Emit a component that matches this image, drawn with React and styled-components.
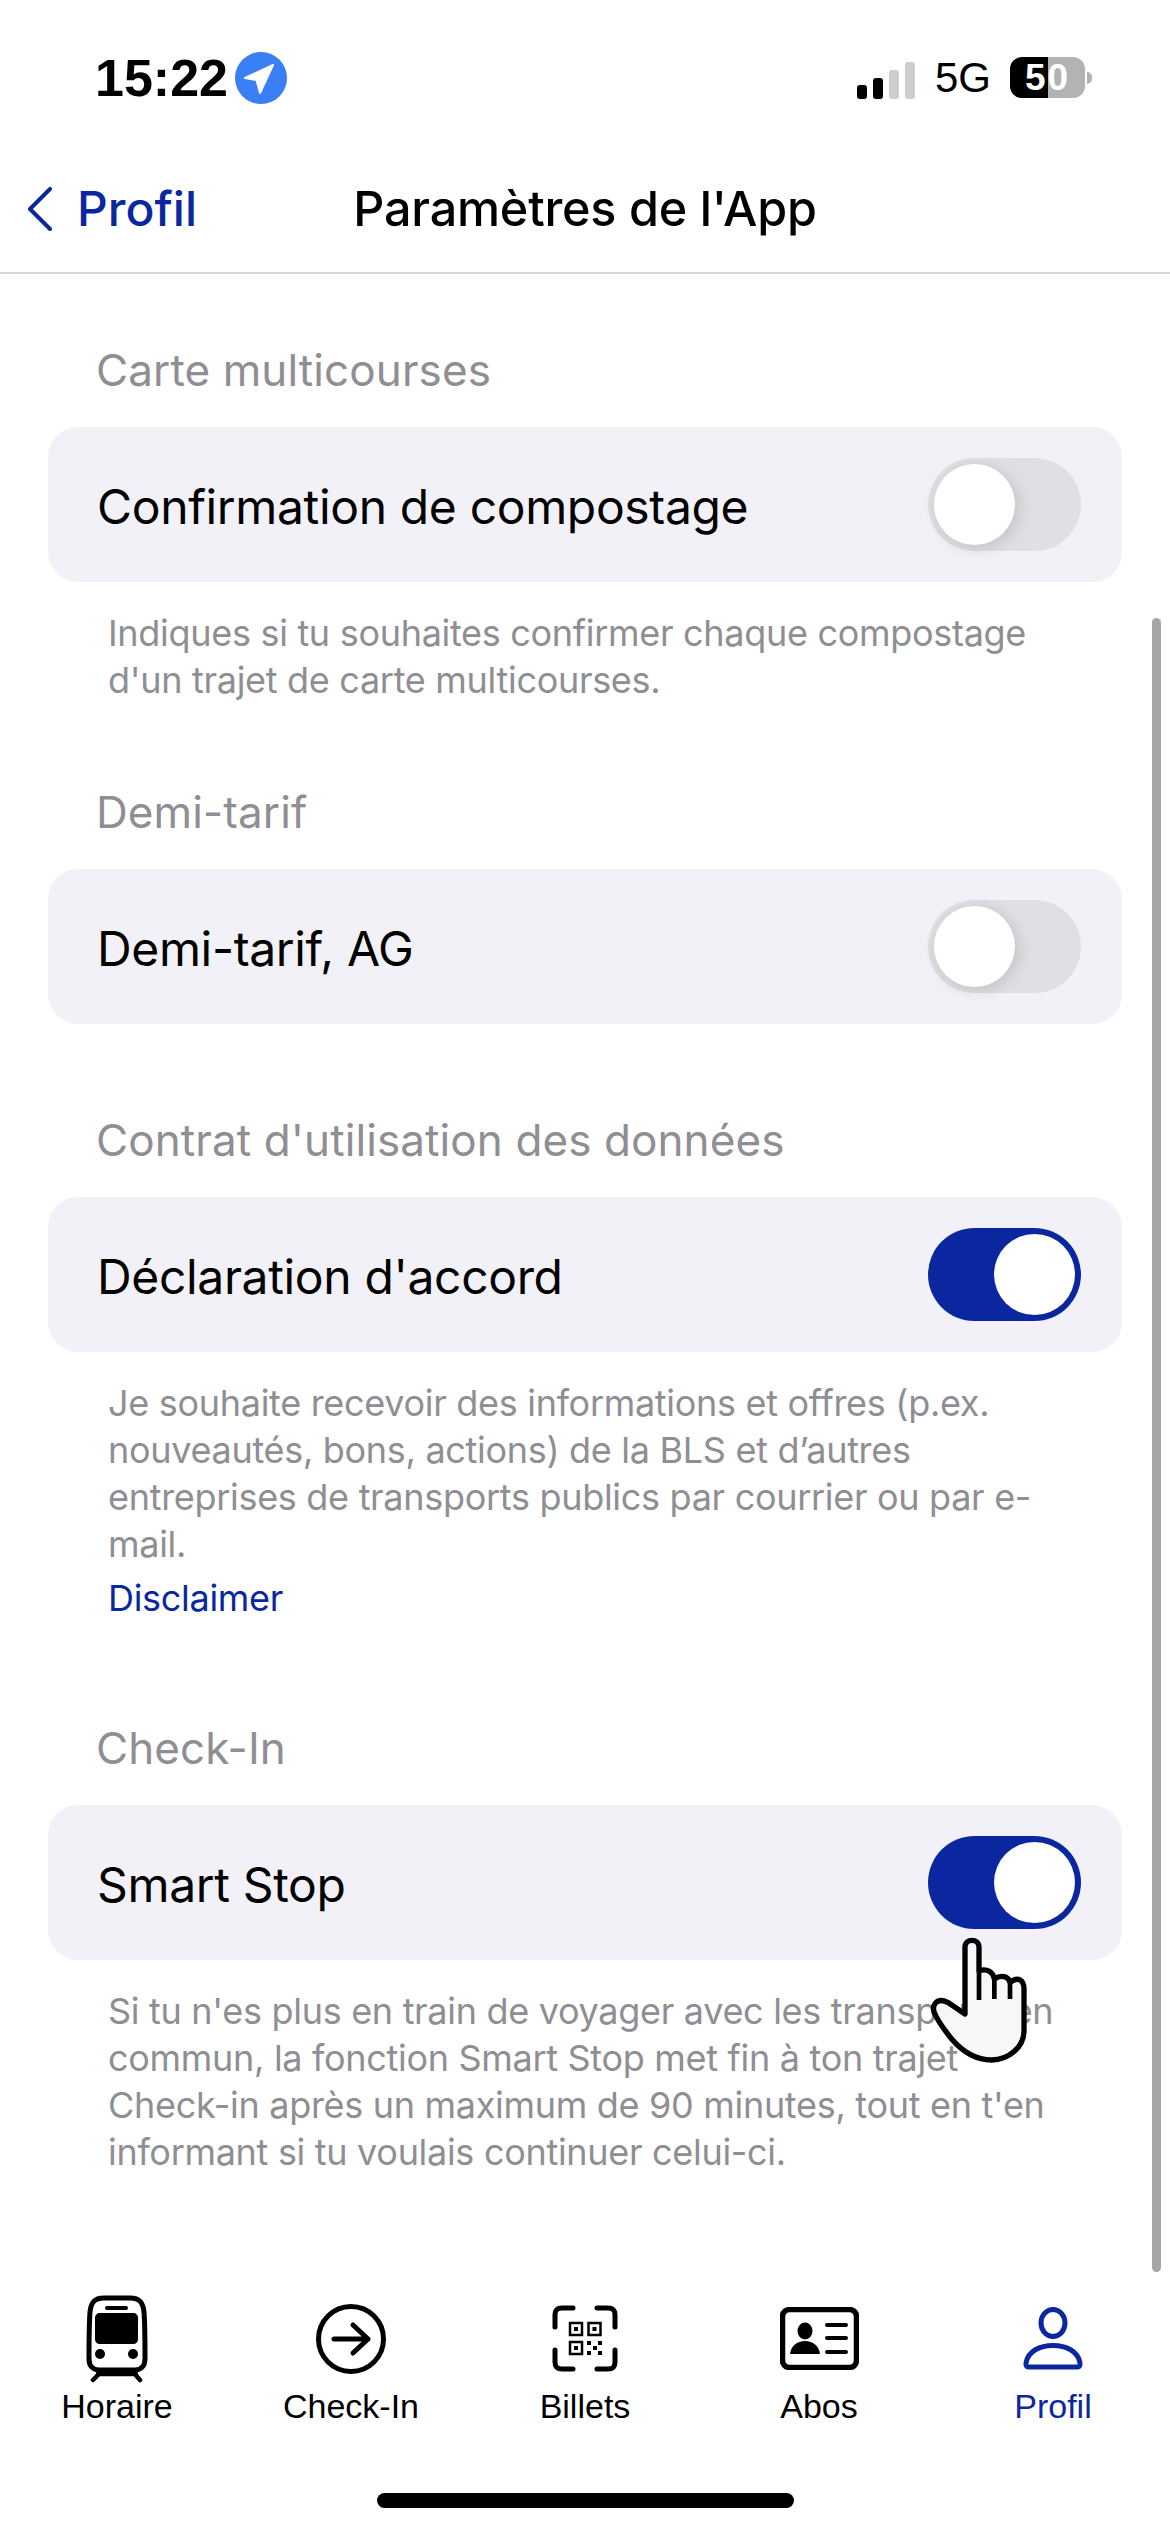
import React from "react";
import styled, { createGlobalStyle } from "styled-components";

const Global = createGlobalStyle`
  html, body { margin: 0; padding: 0; background: #fff; }
  body { font-family: Inter, "Noto Sans", sans-serif; color: #000; }
`;

const Screen = styled.div`
  position: relative;
  width: 1170px;
  height: 2532px;
  overflow: hidden;
  display: flex;
  flex-direction: column;
  background: #fff;
`;

const StatusBar = styled.div`
  height: 155px;
  padding: 0 85px 0 95px;
  display: flex;
  align-items: center;
  justify-content: space-between;
  box-sizing: border-box;
`;

const TimeGroup = styled.div`
  display: flex;
  align-items: center;
  gap: 7px;
`;

const Time = styled.span`
  font-family: "Liberation Sans", sans-serif;
  font-size: 52px;
  font-weight: 700;
  line-height: 52px;
`;

const StatusRight = styled.div`
  display: flex;
  align-items: center;
`;

const Bars = styled.div`
  display: flex;
  align-items: flex-end;
  gap: 6px;
  height: 37px;
  margin-top: 5px;
`;

const Bar = styled.div`
  width: 10px;
  height: ${(p) => p.$h}px;
  border-radius: 3px;
  background: ${(p) => (p.$on ? "#000" : "#cdcdcd")};
`;

const Network = styled.span`
  margin: 0 21px 0 20px;
  font-family: "Liberation Sans", sans-serif;
  font-size: 42px;
  line-height: 42px;
  width: 54px;
`;

const Battery = styled.div`
  position: relative;
  width: 75px;
  height: 41px;
  border-radius: 12px;
  background: linear-gradient(to right, #000 51%, #b3b3b3 51%);
  color: #fff;
  font-family: "Liberation Sans", sans-serif;
  font-size: 37px;
  font-weight: 700;
  letter-spacing: 2px;
  line-height: 41px;
  text-align: center;
  &::after {
    content: "";
    position: absolute;
    right: -7px;
    top: 15px;
    width: 5px;
    height: 12px;
    border-radius: 0 6px 6px 0;
    background: #b3b3b3;
  }
`;

const NavBar = styled.div`
  height: 107px;
  padding-bottom: 10px;
  display: grid;
  grid-template-columns: 1fr auto 1fr;
  align-items: center;
  border-bottom: 2px solid #d6d6d6;
  box-sizing: content-box;
`;

const BackLink = styled.div`
  display: flex;
  align-items: center;
  gap: 24px;
  padding-left: 27px;
  color: #0b27a0;
  font-size: 48px;
  font-weight: 500;
`;

const Title = styled.div`
  font-size: 48.5px;
  font-weight: 500;
  letter-spacing: -0.2px;
`;

const Content = styled.div`
  flex: 1;
  padding: 0 48px;
`;

const Section = styled.section`
  padding-top: ${(p) => p.$top}px;
`;

const SectionLabel = styled.div`
  height: 58px;
  line-height: 58px;
  margin: 0 0 28px 48px;
  color: #8e8e93;
  font-size: 44px;
  letter-spacing: 0.1px;
`;

const Card = styled.div`
  height: 155px;
  padding: 0 41px 0 49px;
  box-sizing: border-box;
  display: flex;
  align-items: center;
  justify-content: space-between;
  background: #f2f1f7;
  border-radius: 30px;
`;

const CardText = styled.span`
  padding-top: 3px;
  font-size: 48px;
  letter-spacing: -0.35px;
`;

const Toggle = styled.div`
  position: relative;
  width: 153px;
  height: 93px;
  border-radius: 47px;
  background: ${(p) => (p.$on ? "#0b27a0" : "#dfdfe4")};
  &::after {
    content: "";
    position: absolute;
    top: 6px;
    left: ${(p) => (p.$on ? "66px" : "6px")};
    width: 81px;
    height: 81px;
    border-radius: 50%;
    background: #fff;
    box-shadow: ${(p) => (p.$on ? "none" : "3px 3px 16px rgba(0,0,0,0.14)")};
  }
`;

const Note = styled.div`
  margin: 28px 48px 0 60px;
  color: #8e8e93;
  font-size: 36px;
  line-height: 47px;
  letter-spacing: -0.3px;
`;

const NoteLink = styled.div`
  color: #0b27a0;
  margin-top: 7px;
`;

const ScrollThumb = styled.div`
  position: absolute;
  left: 1152px;
  top: 618px;
  width: 9px;
  height: 1654px;
  border-radius: 5px;
  background: #a6a6a6;
`;

const Hand = styled.svg`
  position: absolute;
  left: 925px;
  top: 1933px;
`;

const TabBar = styled.nav`
  display: grid;
  grid-template-columns: repeat(5, 234px);
  height: 237px;
  box-sizing: border-box;
`;

const Tab = styled.div`
  display: flex;
  flex-direction: column;
  align-items: center;
  color: ${(p) => (p.$active ? "#0b27a0" : "#000")};
`;

const TabIcon = styled.div`
  height: 87px;
  display: flex;
  align-items: center;
  justify-content: center;
`;

const TabLabel = styled.span`
  margin-top: 4px;
  font-family: "Liberation Sans", sans-serif;
  font-size: 34px;
  line-height: 40px;
`;

const HomeBar = styled.div`
  position: absolute;
  left: 377px;
  top: 2493px;
  width: 417px;
  height: 15px;
  border-radius: 8px;
  background: #000;
`;

const Arrow = () => (
  <svg width="52" height="52" viewBox="0 0 52 52">
    <circle cx="26" cy="26" r="26" fill="#3b7ff5" />
    <path d="M38 13 L10 26 L21.5 28 L25 41 Z" fill="#fff" stroke="#fff" strokeWidth="2" strokeLinejoin="round" />
  </svg>
);

const Chevron = () => (
  <svg width="26" height="44" viewBox="0 0 26 44">
    <path d="M23 2 L3 22 L23 42" fill="none" stroke="currentColor" strokeWidth="4" strokeLinecap="round" strokeLinejoin="round" />
  </svg>
);

const TrainIcon = () => (
  <svg width="64" height="88" viewBox="0 0 64 88" fill="none" stroke="currentColor">
    <path d="M19 3 H45 C55 3 58 8 59 17 C60 30 60 50 60 64 C60 71 56 75 50 75 H14 C8 75 4 71 4 64 C4 50 4 30 5 17 C6 8 9 3 19 3 Z" strokeWidth="5" />
    <path d="M22 13 H41" strokeWidth="4" strokeLinecap="round" />
    <path d="M15 18 H48 C51 18 53 20 53 23 V44 C53 47 51 49 48 49 H15 C12 49 10 47 10 44 V23 C10 20 12 18 15 18 Z" fill="currentColor" stroke="none" />
    <circle cx="15" cy="59" r="5" fill="currentColor" stroke="none" />
    <circle cx="48" cy="59" r="5" fill="currentColor" stroke="none" />
    <path d="M17 76 L8 85 M47 76 L55 85 M13 79 H51" strokeWidth="4.5" strokeLinecap="round" />
  </svg>
);

const CheckInIcon = () => (
  <svg width="70" height="70" viewBox="0 0 70 70" fill="none" stroke="currentColor" strokeWidth="5" strokeLinecap="round" strokeLinejoin="round">
    <circle cx="35" cy="35" r="32.5" />
    <path d="M18 35 H52 M37 21 L52 35 L37 49" />
  </svg>
);

const QrIcon = () => (
  <svg width="66" height="67" viewBox="0 0 66 67" fill="none" stroke="currentColor">
    <g strokeWidth="5" strokeLinecap="round">
      <path d="M3 22 V10 C3 5 5 3 10 3 H21" />
      <path d="M45 3 H56 C61 3 63 5 63 10 V22" />
      <path d="M3 45 V57 C3 62 5 64 10 64 H21" />
      <path d="M45 64 H56 C61 64 63 62 63 57 V45" />
    </g>
    <g strokeWidth="2.5">
      <rect x="18" y="18" width="12" height="12" />
      <rect x="36.5" y="18" width="12" height="12" />
      <rect x="18" y="37" width="12" height="12" />
    </g>
    <g fill="currentColor" stroke="none">
      <rect x="22" y="22" width="4" height="4" />
      <rect x="40.5" y="22" width="4" height="4" />
      <rect x="22" y="41" width="4" height="4" />
      <rect x="35" y="36" width="4" height="4" />
      <rect x="46" y="36" width="4" height="4" />
      <rect x="41" y="41" width="4" height="4" />
      <rect x="35" y="46" width="4" height="4" />
      <rect x="46" y="46" width="4" height="4" />
    </g>
  </svg>
);

const AbosIcon = () => (
  <svg width="79" height="63" viewBox="0 0 79 63" fill="none" stroke="currentColor">
    <rect x="2.5" y="2.5" width="74" height="58" rx="7" strokeWidth="5.5" />
    <ellipse cx="25" cy="24" rx="7.5" ry="8.5" fill="currentColor" stroke="none" />
    <path d="M10 47 C11 39 17 34 25 34 C33 34 39 39 40 47 Z" fill="currentColor" stroke="none" />
    <path d="M47 18 H66 M47 31 H66 M47 45 H66" strokeWidth="4" strokeLinecap="round" />
  </svg>
);

const ProfileIcon = () => (
  <svg width="60" height="63" viewBox="0 0 60 63" fill="none" stroke="currentColor" strokeWidth="5">
    <ellipse cx="30" cy="16" rx="12" ry="13.5" />
    <path d="M5.5 60 Q2.5 60 3 56 C5 44 17 38.5 30 38.5 C43 38.5 55 44 57 56 Q57.5 60 54.5 60 Z" strokeLinejoin="round" />
  </svg>
);

const tabs = [
  { label: "Horaire", icon: <TrainIcon /> },
  { label: "Check-In", icon: <CheckInIcon /> },
  { label: "Billets", icon: <QrIcon /> },
  { label: "Abos", icon: <AbosIcon /> },
  { label: "Profil", icon: <ProfileIcon />, active: true },
];

export default function App() {
  return (
    <Screen>
      <Global />
      <StatusBar>
        <TimeGroup>
          <Time>15:22</Time>
          <Arrow />
        </TimeGroup>
        <StatusRight>
          <Bars>
            <Bar $h={14} $on />
            <Bar $h={21} $on />
            <Bar $h={29} />
            <Bar $h={37} />
          </Bars>
          <Network>5G</Network>
          <Battery>50</Battery>
        </StatusRight>
      </StatusBar>
      <NavBar>
        <BackLink>
          <Chevron />
          Profil
        </BackLink>
        <Title>Paramètres de l'App</Title>
        <div />
      </NavBar>
      <Content>
        <Section $top={67}>
          <SectionLabel>Carte multicourses</SectionLabel>
          <Card>
            <CardText>Confirmation de compostage</CardText>
            <Toggle />
          </Card>
          <Note>
            Indiques si tu souhaites confirmer chaque compostage
            <br />
            d'un trajet de carte multicourses.
          </Note>
        </Section>
        <Section $top={79}>
          <SectionLabel>Demi-tarif</SectionLabel>
          <Card>
            <CardText>Demi-tarif, AG</CardText>
            <Toggle />
          </Card>
        </Section>
        <Section $top={87}>
          <SectionLabel>Contrat d'utilisation des données</SectionLabel>
          <Card>
            <CardText>Déclaration d'accord</CardText>
            <Toggle $on />
          </Card>
          <Note>
            Je souhaite recevoir des informations et offres (p.ex.
            <br />
            nouveautés, bons, actions) de la BLS et d’autres
            <br />
            entreprises de transports publics par courrier ou par e-
            <br />
            mail.
            <NoteLink>Disclaimer</NoteLink>
          </Note>
        </Section>
        <Section $top={97}>
          <SectionLabel>Check-In</SectionLabel>
          <Card>
            <CardText>Smart Stop</CardText>
            <Toggle $on />
          </Card>
          <Note>
            Si tu n'es plus en train de voyager avec les transports en
            <br />
            commun, la fonction Smart Stop met fin à ton trajet
            <br />
            Check-in après un maximum de 90 minutes, tout en t'en
            <br />
            informant si tu voulais continuer celui-ci.
          </Note>
        </Section>
      </Content>
      <TabBar>
        {tabs.map((t) => (
          <Tab key={t.label} $active={t.active}>
            <TabIcon>{t.icon}</TabIcon>
            <TabLabel>{t.label}</TabLabel>
          </Tab>
        ))}
      </TabBar>
      <ScrollThumb />
      <Hand width="104" height="136" viewBox="190 397 312 408">
        <path
          d="M222 645 C205 615 225 588 258 605 L310 640 V440 C310 412 352 412 352 440 V510 C378 502 394 515 398 535 C420 520 440 528 445 545 C470 525 487 540 487 565 V690 C487 740 440 778 390 778 C340 778 300 750 270 715 C250 690 232 665 222 645 Z"
          fill="#f7f7f7"
          stroke="#000"
          strokeWidth="16"
          strokeLinejoin="round"
        />
        <path d="M352 510 V598 M398 535 V595 M445 545 V595" fill="none" stroke="#000" strokeWidth="14" />
      </Hand>
      <HomeBar />
    </Screen>
  );
}
